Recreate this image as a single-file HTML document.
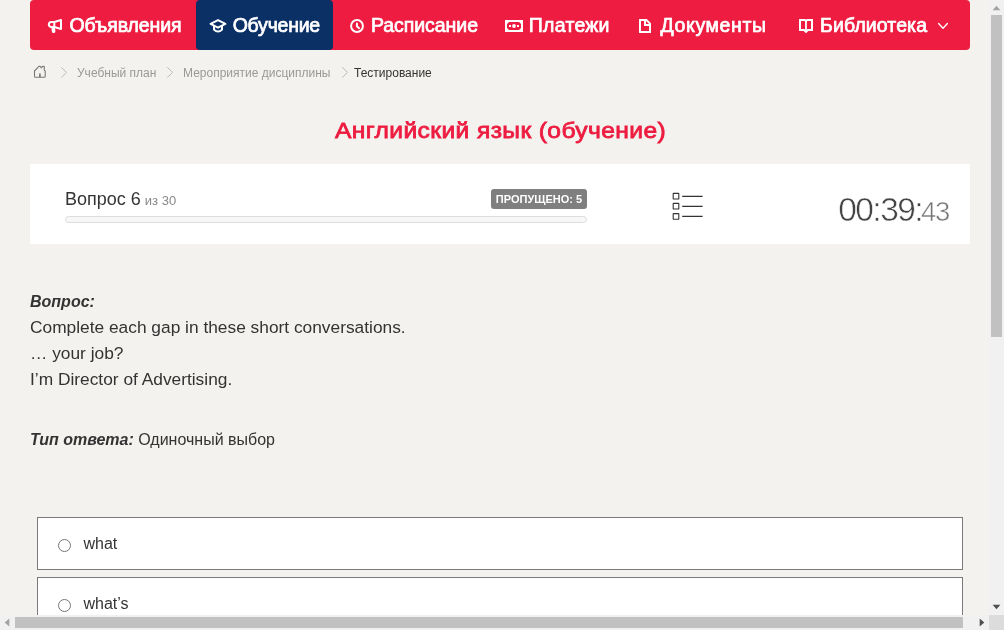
<!DOCTYPE html>
<html lang="ru">
<head>
<meta charset="utf-8">
<title>Тестирование</title>
<style>
*{box-sizing:border-box}
html,body{margin:0;padding:0;width:1004px;height:630px;overflow:hidden;background:#f3f2ee}
body{font-family:"Liberation Sans",Arial,Helvetica,sans-serif;color:#333;position:relative}
#view{position:absolute;left:0;top:0;width:989px;height:615px;overflow:hidden;background:#f3f2ee;will-change:transform}
svg{position:absolute;overflow:visible}
/* nav */
#nav{position:absolute;left:30px;top:0;width:940px;height:50px;background:#ed1c40;border-radius:4px}
#nav .act{position:absolute;left:166px;top:0;width:137px;height:50px;background:#0a3066;border-radius:4px}
#nav .it{position:absolute;top:13px;height:24px;line-height:24px;font-size:19.5px;color:#fff;-webkit-text-stroke:0.7px #fff;white-space:nowrap}
/* breadcrumbs */
.bc{position:absolute;top:66px;height:14px;line-height:14px;font-size:12px;color:#999;white-space:nowrap}
.bc.cur{color:#333}
/* title */
#title{position:absolute;left:335.2px;top:114px;font-size:22.4px;line-height:34px;letter-spacing:0.34px;color:#ed1c40;-webkit-text-stroke:0.8px #ed1c40;white-space:nowrap;transform:scaleX(1.1);transform-origin:0 0}
/* panel */
#panel{position:absolute;left:30px;top:164px;width:940px;height:80px;background:#fff}
#qn{position:absolute;left:35px;top:25px;font-size:18px;line-height:21px;white-space:nowrap}
#qn small{font-size:13px;color:#888;margin-left:-1px}
#badge{position:absolute;left:461px;top:25px;width:96px;height:20px;background:#7f7f7f;border-radius:3px;color:#fff;font-size:11px;font-weight:bold;line-height:20px;text-align:center;white-space:nowrap}
#prog{position:absolute;left:35px;top:52px;width:522px;height:7px;border:1px solid #ddd;border-radius:4px;background:#f7f7f7}
#timer{position:absolute;left:808.2px;top:26px;white-space:nowrap;color:#444;font-size:33.5px;line-height:40px;letter-spacing:-1.54px;-webkit-text-stroke:0.55px #fff}
#timer span{font-size:27.5px;color:#777;letter-spacing:-1.19px;margin-left:-1.2px;-webkit-text-stroke:0.5px #fff}
/* question */
.q{position:absolute;left:30px;white-space:nowrap}
.lbl{font-size:16px;font-weight:bold;font-style:italic;line-height:18px}
.txt{font-size:17.333px;line-height:26px}
/* answers */
.ans{position:absolute;left:37px;width:926px;height:53px;border:1px solid #7a7a7a;background:#fff}
.ans .r{position:absolute;left:20px;top:21px;width:13px;height:13px;border:1px solid #767676;border-radius:50%;background:#fff}
.ans .t{position:absolute;left:45.5px;top:17px;font-size:16px;line-height:18px;white-space:nowrap}
/* scrollbars */
#vs{position:absolute;left:989px;top:0;width:15px;height:615px;background:#f1f1f1}
#vs .th{position:absolute;left:2px;top:15px;width:11px;height:322px;background:#c1c1c1}
#hs{position:absolute;left:0;top:615px;width:989px;height:15px;background:#f1f1f1}
#hs .th{position:absolute;left:15px;top:2px;width:948px;height:11px;background:#c1c1c1}
#corner{position:absolute;left:989px;top:615px;width:15px;height:15px;background:#dcdcdc}
</style>
</head>
<body>
<div id="view">
  <div id="nav">
    <div class="act"></div>
    <svg style="left:14px;top:14px" width="24" height="24" viewBox="0 0 24 24" fill="none" stroke="#fff" stroke-width="2" stroke-linejoin="round" stroke-linecap="round">
      <path d="M7.3 8H10.4L17 6V15L10.4 13H7.3A2.5 2.5 0 0 1 7.3 8Z"/>
      <path d="M10.3 8V13" stroke-linecap="butt"/>
      <path d="M9.1 13.6L9.6 17.2" stroke-width="3.6"/>
    </svg>
    <svg style="left:176px;top:14px" width="24" height="24" viewBox="0 0 24 24" fill="none" stroke="#fff" stroke-width="2" stroke-linejoin="round" stroke-linecap="round">
      <path d="M12 6.1L4.6 9.9L12 13.7L19.4 9.9Z"/>
      <path d="M8 12.2V15.6Q12 19.6 16 15.6V12.2"/>
    </svg>
    <svg style="left:315px;top:14px" width="24" height="24" viewBox="0 0 24 24" fill="none" stroke="#fff" stroke-width="2" stroke-linejoin="round" stroke-linecap="round">
      <circle cx="12" cy="12" r="5.9"/>
      <path d="M11.9 9.5V12.3L14.1 14.2" stroke-width="2"/>
    </svg>
    <svg style="left:472px;top:14px" width="24" height="24" viewBox="0 0 24 24">
      <rect x="3" y="6" width="18" height="12" fill="#fff"/>
      <path d="M7 8H17L19 10V14L17 16H7L5 14V10Z" fill="#ed1c40"/>
      <circle cx="12" cy="12" r="1.9" fill="#fff"/>
      <rect x="7" y="11" width="2" height="2" fill="#fff"/>
      <rect x="15" y="11" width="2" height="2" fill="#fff"/>
    </svg>
    <svg style="left:603px;top:14px" width="24" height="24" viewBox="0 0 24 24" fill="none" stroke="#fff" stroke-width="2">
      <path d="M7 6H13.4L17 9.6V18H7Z"/>
      <path d="M12 6V11H17" />
    </svg>
    <svg style="left:764px;top:14px" width="24" height="24" viewBox="0 0 24 24" fill="none" stroke="#fff" stroke-width="2" stroke-linejoin="miter">
      <path d="M6 6H10.8L12 7L13.2 6H18V16H14L12 17.9L10 16H6Z"/>
      <path d="M12 7V17" stroke-width="1.8"/>
    </svg>
    <svg style="left:907px;top:22px" width="12" height="8" viewBox="0 0 12 8" fill="none" stroke="#fff" stroke-width="1.4" stroke-linecap="round" stroke-linejoin="round">
      <path d="M1.6 1.6L6 6.2L10.4 1.6"/>
    </svg>
    <div class="it" style="left:39.5px;letter-spacing:-0.07px">Объявления</div>
    <div class="it" style="left:202.7px;letter-spacing:-0.24px">Обучение</div>
    <div class="it" style="left:340.9px;letter-spacing:-0.04px">Расписание</div>
    <div class="it" style="left:498.8px;letter-spacing:0.27px">Платежи</div>
    <div class="it" style="left:630.5px;letter-spacing:0.62px">Документы</div>
    <div class="it" style="left:790.1px;letter-spacing:0.1px">Библиотека</div>
  </div>

  <!-- breadcrumbs -->
  <svg style="left:33px;top:65px" width="14" height="14" viewBox="0 0 14 14" fill="none" stroke="#7a7a7a" stroke-width="1.1" stroke-linejoin="round">
    <path d="M1.5 6L5.9 1.4H7.3L8.4 2.8L9.6 1.4H10.7Q11.3 1.4 11.3 2V5.2L12.2 6V11.5Q12.2 12.3 11.4 12.3H2.3Q1.5 12.3 1.5 11.5Z"/>
    <path d="M6.9 12.3V8.4" stroke-width="1.7"/>
  </svg>
  <svg style="left:60px;top:66px" width="8" height="13" viewBox="0 0 8 13" fill="none" stroke="#bbb" stroke-width="1"><path d="M1.3 1.3L6.5 6.4L1.3 11.5"/></svg>
  <svg style="left:166px;top:66px" width="8" height="13" viewBox="0 0 8 13" fill="none" stroke="#bbb" stroke-width="1"><path d="M1.3 1.3L6.5 6.4L1.3 11.5"/></svg>
  <svg style="left:341px;top:66px" width="8" height="13" viewBox="0 0 8 13" fill="none" stroke="#bbb" stroke-width="1"><path d="M1.3 1.3L6.5 6.4L1.3 11.5"/></svg>
  <div class="bc" style="left:77px">Учебный план</div>
  <div class="bc" style="left:183px">Мероприятие дисциплины</div>
  <div class="bc cur" style="left:354px">Тестирование</div>

  <div id="title">Английский язык (обучение)</div>

  <div id="panel">
    <div id="qn">Вопрос 6 <small>из 30</small></div>
    <div id="badge">ПРОПУЩЕНО: 5</div>
    <div id="prog"></div>
    <svg style="left:642px;top:28px" width="32" height="28" viewBox="0 0 32 28" fill="none" stroke="#333" stroke-width="1.1">
      <rect x="1.2" y="1.4" width="5.6" height="5.6" rx="0.3"/>
      <rect x="1.2" y="11.4" width="5.6" height="5.6" rx="0.3"/>
      <rect x="1.2" y="21.6" width="5.6" height="5.6" rx="0.3"/>
      <path d="M10.2 4.4H30.6M10.2 14.3H30.6M10.2 24.4H30.6" stroke-width="1.2"/>
    </svg>
    <div id="timer">00:39:<span>43</span></div>
  </div>

  <div class="q lbl" style="top:293px">Вопрос:</div>
  <div class="q txt" style="top:314px">Complete each gap in these short conversations.</div>
  <div class="q txt" style="top:340px">… your job?</div>
  <div class="q txt" style="top:366px">I’m Director of Advertising.</div>
  <div class="q" style="top:431px;font-size:16px;line-height:18px"><b><i>Тип ответа:</i></b> Одиночный выбор</div>

  <div class="ans" style="top:517px"><div class="r"></div><div class="t">what</div></div>
  <div class="ans" style="top:577px"><div class="r"></div><div class="t">what’s</div></div>
</div>
<div id="vs"><div class="th"></div>
  <svg style="left:0;top:0" width="15" height="615" viewBox="0 0 15 615">
    <polygon points="3.6,10.3 11.4,10.3 7.5,5.7" fill="#a3a3a3"/>
    <polygon points="3.6,604.7 11.4,604.7 7.5,609.3" fill="#505050"/>
  </svg>
</div>
<div id="hs"><div class="th"></div>
  <svg style="left:0;top:0" width="989" height="15" viewBox="0 0 989 15">
    <polygon points="9.3,3.6 9.3,11.4 4.7,7.5" fill="#a3a3a3"/>
    <polygon points="979.7,3.6 979.7,11.4 984.3,7.5" fill="#505050"/>
  </svg>
</div>
<div id="corner"></div>
</body>
</html>
